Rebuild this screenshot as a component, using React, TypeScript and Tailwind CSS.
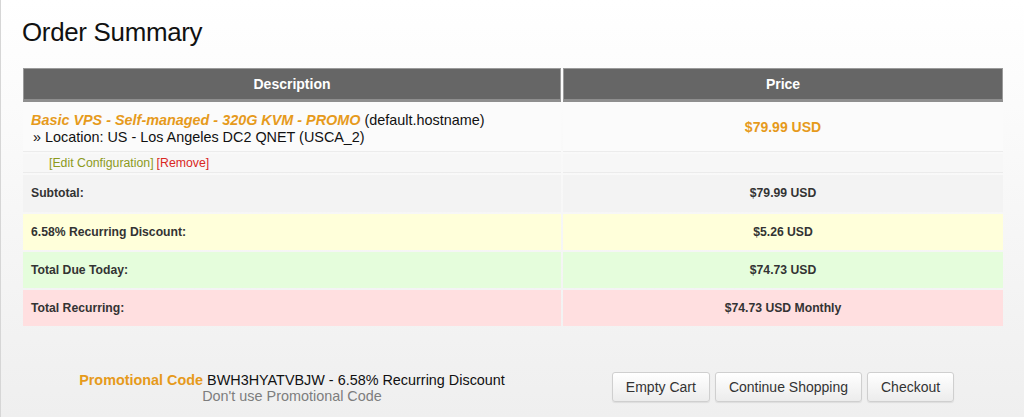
import React from "react";

const font = { fontFamily: '"Liberation Sans", Arial, sans-serif' };

export default function App() {
  return (
    <div
      style={font}
      className="w-[1024px] h-[417px] overflow-hidden bg-gradient-to-b from-[#ffffff] to-[#efefef] border-l border-[#d6d6d6] text-[#222]"
    >
      <div className="pl-[21px] pt-[15px]">
        <h1 className="text-[25.9px] leading-[34px] font-normal text-[#111] tracking-[-0.3px]">Order Summary</h1>
      </div>

      <div className="ml-[22px] mt-[19px] w-[980px] grid grid-cols-[538px_440px] gap-x-[2px] gap-y-[2px] grid-rows-[34px_48px_19px_37px_36px_36px_36px]">
        <div className="bg-[#666666] border border-[#9a9a9a] border-b-[3px] border-b-[#8e8e8e] flex items-center justify-center text-white font-bold text-[14px]">
          Description
        </div>
        <div className="bg-[#666666] border border-[#9a9a9a] border-b-[3px] border-b-[#8e8e8e] flex items-center justify-center text-white font-bold text-[14px]">
          Price
        </div>

        <div className="bg-[#fbfbfb] border-b border-[#ececec] pl-[8px] pt-[8px] text-[14.4px] leading-[17px] text-[#111]">
          <div>
            <span className="italic font-bold text-[#e69a1b]">Basic VPS - Self-managed - 320G KVM - PROMO</span> (default.hostname)
          </div>
          <div className="pl-[2px]">» Location: US - Los Angeles DC2 QNET (USCA_2)</div>
        </div>
        <div className="bg-[#fbfbfb] border-b border-[#ececec] flex items-center justify-center text-[14px] font-bold text-[#e69a1b]">
          $79.99 USD
        </div>

        <div className="bg-[#f7f7f7] border-b border-[#ebebeb] pl-[26px] flex items-center text-[12.3px]">
          <span className="text-[#8c9a1c]">[Edit Configuration]</span>
          <span className="text-[#d9281e] ml-[3px]">[Remove]</span>
        </div>
        <div className="bg-[#f7f7f7] border-b border-[#ebebeb]"></div>

        <div className="bg-[#f3f3f3] pl-[8px] flex items-center text-[12.2px] font-bold text-[#333]">Subtotal:</div>
        <div className="bg-[#f3f3f3] flex items-center justify-center text-[12.2px] font-bold text-[#333]">$79.99 USD</div>

        <div className="bg-[#ffffda] pl-[8px] flex items-center text-[12.2px] font-bold text-[#333]">6.58% Recurring Discount:</div>
        <div className="bg-[#ffffda] flex items-center justify-center text-[12.2px] font-bold text-[#333]">$5.26 USD</div>

        <div className="bg-[#e5fddc] pl-[8px] flex items-center text-[12.2px] font-bold text-[#333]">Total Due Today:</div>
        <div className="bg-[#e5fddc] flex items-center justify-center text-[12.2px] font-bold text-[#333]">$74.73 USD</div>

        <div className="bg-[#ffdfe0] pl-[8px] flex items-center text-[12.2px] font-bold text-[#333]">Total Recurring:</div>
        <div className="bg-[#ffdfe0] flex items-center justify-center text-[12.2px] font-bold text-[#333]">$74.73 USD Monthly</div>
      </div>

      <div className="ml-[22px] mt-[46px] w-[980px] grid grid-cols-[538px_440px] gap-x-[2px]">
        <div className="flex flex-col items-center text-[14.4px] leading-[16px]">
          <div className="text-[#111]">
            <span className="font-bold text-[#e69a1b]">Promotional Code</span> BWH3HYATVBJW - 6.58% Recurring Discount
          </div>
          <div className="text-[#7d7d7d]">Don't use Promotional Code</div>
        </div>
        <div className="flex items-start justify-center gap-[5px]">
          <button className="h-[30px] px-[13px] rounded-[3px] border border-[#cfcfcf] bg-gradient-to-b from-[#ffffff] to-[#ececec] text-[14px] text-[#333] shadow-[0_1px_1px_rgba(0,0,0,0.08)]">
            Empty Cart
          </button>
          <button className="h-[30px] px-[13px] rounded-[3px] border border-[#cfcfcf] bg-gradient-to-b from-[#ffffff] to-[#ececec] text-[14px] text-[#333] shadow-[0_1px_1px_rgba(0,0,0,0.08)]">
            Continue Shopping
          </button>
          <button className="h-[30px] px-[13px] rounded-[3px] border border-[#cfcfcf] bg-gradient-to-b from-[#ffffff] to-[#ececec] text-[14px] text-[#333] shadow-[0_1px_1px_rgba(0,0,0,0.08)]">
            Checkout
          </button>
        </div>
      </div>
    </div>
  );
}
